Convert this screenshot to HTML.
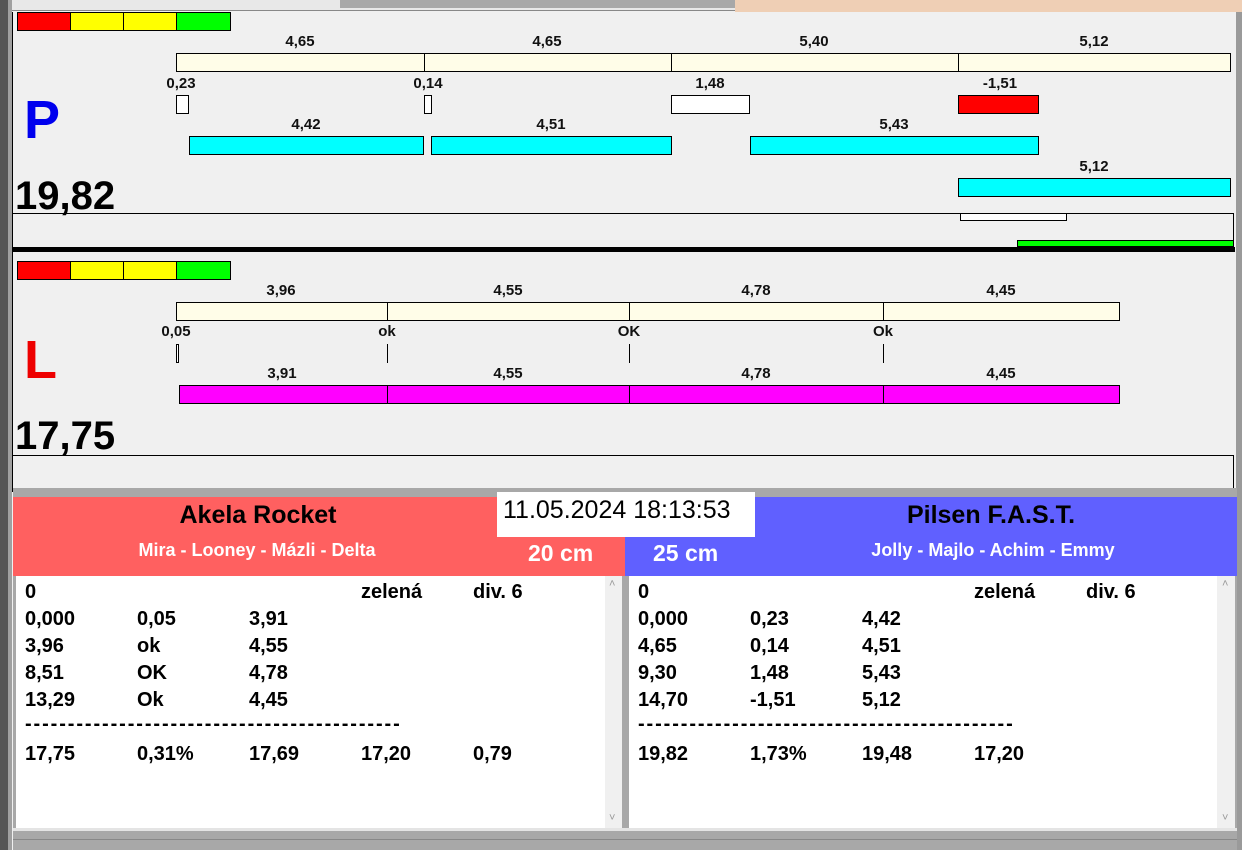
<!DOCTYPE html>
<html><head><meta charset="utf-8"><style>
*{margin:0;padding:0;box-sizing:border-box}
body{width:1242px;height:850px;overflow:hidden;background:#f0f0f0;font-family:"Liberation Sans",Arial,sans-serif;position:relative}
div{position:absolute}
.b{border:1px solid #000}
.lbl{font-weight:bold;font-size:15px;color:#111;transform:translateX(-50%);white-space:nowrap;margin-top:2px}
.cr{background:#fffde8}
.cy{background:#00ffff}
.mg{background:#ff00ff}
.t{font-weight:bold;font-size:20px;color:#000;white-space:nowrap;margin-top:1px}
.d{letter-spacing:1.9px}
</style></head><body>
<!-- frame -->
<div style="left:0;top:0;width:8px;height:850px;background:#555"></div>
<div style="left:8px;top:0;width:4px;height:850px;background:#a0a0a0"></div>
<div style="left:12px;top:0;width:1230px;height:11px;background:#e8e8e8;border-bottom:1px solid #888"></div>
<div style="left:340px;top:0;width:395px;height:8px;background:#a8a8a8"></div>
<div style="left:735px;top:0;width:507px;height:12px;background:#efcfb5"></div>
<div style="left:1236px;top:12px;width:6px;height:838px;background:#9a9a9a"></div>
<div style="left:12px;top:12px;width:1px;height:480px;background:#000"></div>

<!-- P panel -->
<div class="b" style="left:17px;top:12px;width:54px;height:19px;background:#f00"></div>
<div class="b" style="left:70px;top:12px;width:54px;height:19px;background:#ff0"></div>
<div class="b" style="left:123px;top:12px;width:54px;height:19px;background:#ff0"></div>
<div class="b" style="left:176px;top:12px;width:55px;height:19px;background:#0f0"></div>

<div class="lbl" style="left:300px;top:31px">4,65</div>
<div class="lbl" style="left:547px;top:31px">4,65</div>
<div class="lbl" style="left:814px;top:31px">5,40</div>
<div class="lbl" style="left:1094px;top:31px">5,12</div>
<div class="b cr" style="left:176px;top:53px;width:249px;height:19px"></div>
<div class="b cr" style="left:424px;top:53px;width:248px;height:19px"></div>
<div class="b cr" style="left:671px;top:53px;width:288px;height:19px"></div>
<div class="b cr" style="left:958px;top:53px;width:273px;height:19px"></div>

<div class="lbl" style="left:181px;top:73px">0,23</div>
<div class="lbl" style="left:428px;top:73px">0,14</div>
<div class="lbl" style="left:710px;top:73px">1,48</div>
<div class="lbl" style="left:1000px;top:73px">-1,51</div>
<div class="b" style="left:176px;top:95px;width:13px;height:19px;background:#fff"></div>
<div class="b" style="left:424px;top:95px;width:8px;height:19px;background:#fff"></div>
<div class="b" style="left:671px;top:95px;width:79px;height:19px;background:#fff"></div>
<div class="b" style="left:958px;top:95px;width:81px;height:19px;background:#f00"></div>

<div class="lbl" style="left:306px;top:114px">4,42</div>
<div class="lbl" style="left:551px;top:114px">4,51</div>
<div class="lbl" style="left:894px;top:114px">5,43</div>
<div class="b cy" style="left:189px;top:136px;width:235px;height:19px"></div>
<div class="b cy" style="left:431px;top:136px;width:241px;height:19px"></div>
<div class="b cy" style="left:750px;top:136px;width:289px;height:19px"></div>
<div class="lbl" style="left:1094px;top:156px">5,12</div>
<div class="b cy" style="left:958px;top:178px;width:273px;height:19px"></div>

<div style="left:24px;top:89px;font-size:54px;font-weight:bold;color:#0000ee">P</div>
<div style="left:15px;top:174px;font-size:40px;font-weight:bold;color:#000">19,82</div>
<div style="left:13px;top:213px;width:1221px;height:1px;background:#000"></div>
<div style="left:1233px;top:213px;width:1px;height:33px;background:#000"></div>
<div class="b" style="left:960px;top:213px;width:107px;height:8px;background:#fff"></div>
<div class="b" style="left:1017px;top:240px;width:217px;height:7px;background:#0f0"></div>
<div style="left:13px;top:247px;width:1222px;height:5px;background:#000"></div>

<!-- L panel -->
<div class="b" style="left:17px;top:261px;width:54px;height:19px;background:#f00"></div>
<div class="b" style="left:70px;top:261px;width:54px;height:19px;background:#ff0"></div>
<div class="b" style="left:123px;top:261px;width:54px;height:19px;background:#ff0"></div>
<div class="b" style="left:176px;top:261px;width:55px;height:19px;background:#0f0"></div>

<div class="lbl" style="left:281px;top:280px">3,96</div>
<div class="lbl" style="left:508px;top:280px">4,55</div>
<div class="lbl" style="left:756px;top:280px">4,78</div>
<div class="lbl" style="left:1001px;top:280px">4,45</div>
<div class="b cr" style="left:176px;top:302px;width:212px;height:19px"></div>
<div class="b cr" style="left:387px;top:302px;width:243px;height:19px"></div>
<div class="b cr" style="left:629px;top:302px;width:255px;height:19px"></div>
<div class="b cr" style="left:883px;top:302px;width:237px;height:19px"></div>

<div class="lbl" style="left:176px;top:321px">0,05</div>
<div class="lbl" style="left:387px;top:321px">ok</div>
<div class="lbl" style="left:629px;top:321px">OK</div>
<div class="lbl" style="left:883px;top:321px">Ok</div>
<div class="b" style="left:176px;top:344px;width:3px;height:19px;background:#fff"></div>
<div style="left:387px;top:344px;width:1px;height:19px;background:#000"></div>
<div style="left:629px;top:344px;width:1px;height:19px;background:#000"></div>
<div style="left:883px;top:344px;width:1px;height:19px;background:#000"></div>

<div class="lbl" style="left:282px;top:363px">3,91</div>
<div class="lbl" style="left:508px;top:363px">4,55</div>
<div class="lbl" style="left:756px;top:363px">4,78</div>
<div class="lbl" style="left:1001px;top:363px">4,45</div>
<div class="b mg" style="left:179px;top:385px;width:209px;height:19px"></div>
<div class="b mg" style="left:387px;top:385px;width:243px;height:19px"></div>
<div class="b mg" style="left:629px;top:385px;width:255px;height:19px"></div>
<div class="b mg" style="left:883px;top:385px;width:237px;height:19px"></div>

<div style="left:24px;top:329px;font-size:54px;font-weight:bold;color:#ee0000">L</div>
<div style="left:15px;top:414px;font-size:40px;font-weight:bold;color:#000">17,75</div>
<div style="left:13px;top:455px;width:1221px;height:1px;background:#000"></div>
<div style="left:1233px;top:455px;width:1px;height:33px;background:#000"></div>
<div style="left:13px;top:488px;width:1224px;height:9px;background:#a8a8a8"></div>

<!-- headers -->
<div style="left:13px;top:497px;width:612px;height:79px;background:#ff6060"></div>
<div style="left:625px;top:497px;width:612px;height:79px;background:#6060ff"></div>
<div style="left:497px;top:492px;width:258px;height:45px;background:#fff"></div>
<div style="left:503px;top:496px;font-size:25px;color:#000">11.05.2024 18:13:53</div>
<div style="left:258px;top:501px;transform:translateX(-50%);font-size:25px;font-weight:bold;color:#000;white-space:nowrap">Akela Rocket</div>
<div style="left:257px;top:540px;transform:translateX(-50%);font-size:18px;font-weight:bold;color:#fff;white-space:nowrap">Mira - Looney - Mázli - Delta</div>
<div style="left:528px;top:540px;font-size:23px;font-weight:bold;color:#fff">20 cm</div>
<div style="left:991px;top:501px;transform:translateX(-50%);font-size:25px;font-weight:bold;color:#000;white-space:nowrap">Pilsen F.A.S.T.</div>
<div style="left:653px;top:540px;font-size:23px;font-weight:bold;color:#fff">25 cm</div>
<div style="left:993px;top:540px;transform:translateX(-50%);font-size:18px;font-weight:bold;color:#fff;white-space:nowrap">Jolly - Majlo - Achim - Emmy</div>

<!-- text areas -->
<div style="left:13px;top:576px;width:1224px;height:274px;background:#a8a8a8"></div>
<div style="left:16px;top:576px;width:589px;height:252px;background:#fff"></div>
<div style="left:605px;top:576px;width:17px;height:252px;background:#f0f0f0;color:#999;font-size:11px;text-align:center">
 <div style="left:4px;top:2px">˄</div><div style="left:4px;top:236px">˅</div></div>
<div style="left:629px;top:576px;width:588px;height:252px;background:#fff"></div>
<div style="left:1217px;top:576px;width:18px;height:252px;background:#f0f0f0;color:#999;font-size:11px">
 <div style="left:5px;top:2px">˄</div><div style="left:5px;top:236px">˅</div></div>
<div style="left:13px;top:828px;width:1224px;height:3px;background:#e4e4e4"></div>
<div style="left:13px;top:839px;width:1224px;height:1px;background:#888"></div>

<!-- left text -->
<div class="t" style="left:25px;top:580px">0</div><div class="t" style="left:361px;top:580px">zelená</div><div class="t" style="left:473px;top:580px">div. 6</div>
<div class="t" style="left:25px;top:607px">0,000</div><div class="t" style="left:137px;top:607px">0,05</div><div class="t" style="left:249px;top:607px">3,91</div>
<div class="t" style="left:25px;top:634px">3,96</div><div class="t" style="left:137px;top:634px">ok</div><div class="t" style="left:249px;top:634px">4,55</div>
<div class="t" style="left:25px;top:661px">8,51</div><div class="t" style="left:137px;top:661px">OK</div><div class="t" style="left:249px;top:661px">4,78</div>
<div class="t" style="left:25px;top:688px">13,29</div><div class="t" style="left:137px;top:688px">Ok</div><div class="t" style="left:249px;top:688px">4,45</div>
<div class="t d" style="left:25px;top:712px">--------------------------------------------</div>
<div class="t" style="left:25px;top:742px">17,75</div><div class="t" style="left:137px;top:742px">0,31%</div><div class="t" style="left:249px;top:742px">17,69</div><div class="t" style="left:361px;top:742px">17,20</div><div class="t" style="left:473px;top:742px">0,79</div>

<!-- right text -->
<div class="t" style="left:638px;top:580px">0</div><div class="t" style="left:974px;top:580px">zelená</div><div class="t" style="left:1086px;top:580px">div. 6</div>
<div class="t" style="left:638px;top:607px">0,000</div><div class="t" style="left:750px;top:607px">0,23</div><div class="t" style="left:862px;top:607px">4,42</div>
<div class="t" style="left:638px;top:634px">4,65</div><div class="t" style="left:750px;top:634px">0,14</div><div class="t" style="left:862px;top:634px">4,51</div>
<div class="t" style="left:638px;top:661px">9,30</div><div class="t" style="left:750px;top:661px">1,48</div><div class="t" style="left:862px;top:661px">5,43</div>
<div class="t" style="left:638px;top:688px">14,70</div><div class="t" style="left:750px;top:688px">-1,51</div><div class="t" style="left:862px;top:688px">5,12</div>
<div class="t d" style="left:638px;top:712px">--------------------------------------------</div>
<div class="t" style="left:638px;top:742px">19,82</div><div class="t" style="left:750px;top:742px">1,73%</div><div class="t" style="left:862px;top:742px">19,48</div><div class="t" style="left:974px;top:742px">17,20</div>
</body></html>
